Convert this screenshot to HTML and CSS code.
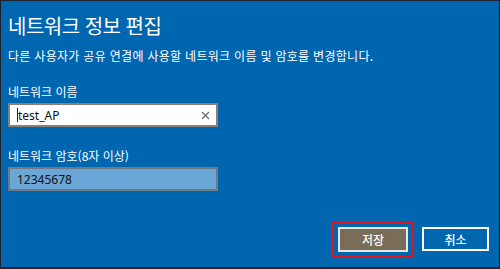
FILE: index.html
```html
<!DOCTYPE html>
<html lang="ko">
<head>
<meta charset="utf-8">
<link rel="stylesheet" href="styles.css">
</head>
<body>
<div class="dialog">
  <h1 class="title">네트워크 정보 편집</h1>
  <p class="desc">다른 사용자가 공유 연결에 사용할 네트워크 이름 및 암호를 변경합니다.</p>
  <label class="label first">네트워크 이름</label>
  <div class="field">
    <span class="caret"></span><span class="value">test_AP</span>
    <svg class="clear" width="9" height="9" viewBox="0 0 9 9"><path d="M1 1 L8 8 M8 1 L1 8" stroke="#6b6b6b" stroke-width="1.2" fill="none"/></svg>
  </div>
  <label class="label second">네트워크 암호(8자 이상)</label>
  <div class="field pw"><span class="value">12345678</span></div>
  <div class="actions">
    <div class="highlight"><button class="btn save">저장</button></div>
    <button class="btn cancel">취소</button>
  </div>
</div>
</body>
</html>
```

FILE: styles.css
```css
html, body {
  margin: 0;
  padding: 0;
  background: #0066b0;
}
.dialog {
  box-sizing: border-box;
  width: 500px;
  height: 269px;
  background: #0066b0;
  border-style: solid;
  border-color: #1b2430;
  border-width: 1px 1px 2px 1px;
  padding: 0 10px 9px 7px;
  display: flex;
  flex-direction: column;
  color: #ffffff;
  font-family: "Noto Sans CJK KR", "Noto Sans", sans-serif;
}
.title {
  margin: 13px 0 0 0;
  font-size: 20px;
  line-height: 24px;
  font-weight: 400;
  letter-spacing: -0.5px;
}
.desc {
  margin: 10px 0 0 0;
  font-size: 12px;
  line-height: 16px;
  letter-spacing: 0.3px;
}
.label {
  display: block;
  font-size: 12px;
  line-height: 16px;
}
.label.first { margin-top: 20px; }
.label.second { margin-top: 21px; }
.field {
  box-sizing: border-box;
  margin-top: 3px;
  width: 210px;
  height: 24px;
  background: #ffffff;
  border: 2px solid #8c8170;
  display: flex;
  align-items: center;
  padding-left: 7px;
  padding-right: 6px;
  color: #111;
  font-family: "Noto Sans", "Noto Sans CJK KR", sans-serif;
  font-size: 12px;
}
.caret {
  width: 1px;
  height: 14px;
  background: #222;
}
.value { flex: 1; }
.clear { flex: none; }
.field.pw {
  background: #6aa6d6;
  border-color: #6f7a84;
}
.actions {
  margin-top: auto;
  display: flex;
  justify-content: flex-end;
  align-items: flex-start;
  gap: 8px;
}
.highlight {
  border: 2px solid #e0161e;
  padding: 3px 4px 4px 4px;
  display: flex;
}
.btn {
  box-sizing: border-box;
  height: 25px;
  border: 2px solid #ffffff;
  color: #ffffff;
  font-family: "Noto Sans CJK KR", sans-serif;
  font-size: 12px;
  font-weight: 500;
  padding: 0;
  margin: 0;
}
.save {
  width: 70px;
  background: #7a6d58;
  border-color: #e8e8e8;
}
.cancel {
  margin-top: 5px;
  width: 67px;
  height: 24px;
  background: #0066b0;
}
```
